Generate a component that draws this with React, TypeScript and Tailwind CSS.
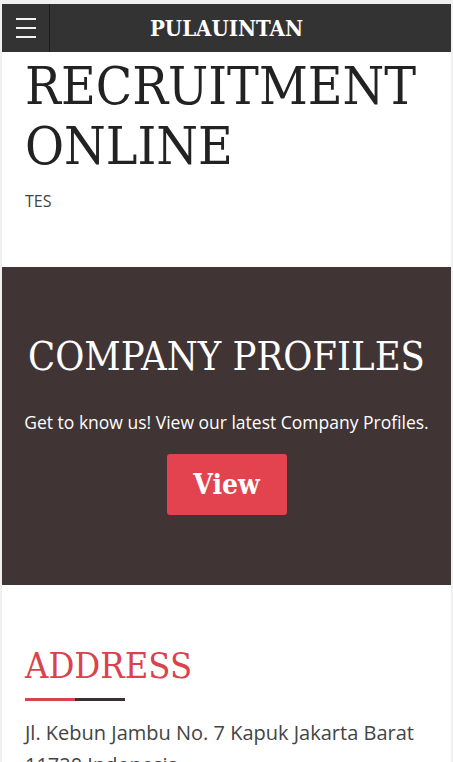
export default function App() {
  const slab = "font-['DejaVu_Serif_Condensed','DejaVu_Serif',serif]";
  return (
    <div className="min-h-[762px] bg-[#f0f0f0] px-[2px] pt-[4px] font-['Open_Sans',sans-serif]">
      <div className="bg-white">
        {/* top bar */}
        <header className="flex h-[48px] bg-[#333333]">
          <button className="flex w-[48px] flex-col items-center justify-center gap-[7px] border-r border-[#1c1c1c]">
            <span className="block h-[2px] w-[20px] bg-[#f2f2f2]" />
            <span className="block h-[2px] w-[20px] bg-[#f2f2f2]" />
            <span className="block h-[2px] w-[20px] bg-[#f2f2f2]" />
          </button>
          <div className="flex flex-1 items-center justify-center pr-[48px]">
            <span className={`${slab} text-[22px] font-bold text-white`}>PULAUINTAN</span>
          </div>
        </header>

        <main>
          <section className="px-[23px] pb-[54px] pt-[4px]">
            <h1 className={`${slab} text-[53px] leading-[60px] text-[#222222]`}>
              RECRUITMENT ONLINE
            </h1>
            <p className="mt-[13px] text-[16px] text-[#444444]">TES</p>
          </section>

          <section className="bg-[#403434] px-[8px] pb-[70px] pt-[64px] text-center text-white">
            <h2 className={`${slab} text-[39.5px] leading-[50px]`}>COMPANY PROFILES</h2>
            <p className="mt-[28px] text-[17.5px] leading-[26px]">
              Get to know us! View our latest Company Profiles.
            </p>
            <a className={`${slab} mx-auto mt-[19px] flex h-[61px] w-[120px] items-center justify-center rounded-[3px] bg-[#e3434f] text-[28px] font-bold`}>
              View
            </a>
          </section>

          <section className="px-[23px] pt-[58px]">
            <h2 className={`${slab} text-[36px] leading-[46px] text-[#d9434d]`}>ADDRESS</h2>
            <div className="mt-[9px] flex h-[3px] w-[100px]">
              <span className="block w-1/2 bg-[#d9434d]" />
              <span className="block w-1/2 bg-[#3b3030]" />
            </div>
            <p className="mt-[16px] text-[20px] leading-[32px] text-[#444444]">
              Jl. Kebun Jambu No. 7 Kapuk Jakarta Barat 11720 Indonesia
            </p>
          </section>
        </main>
      </div>
    </div>
  );
}
